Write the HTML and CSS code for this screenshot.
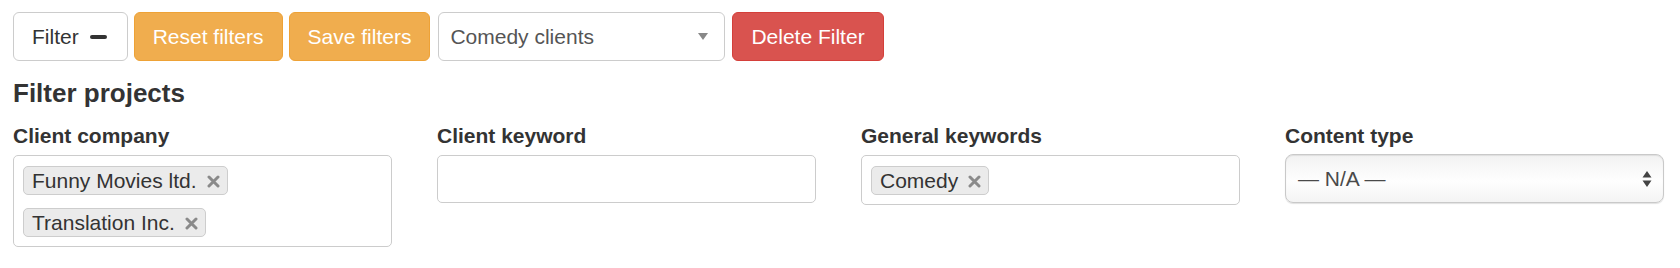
FILE: index.html
```html
<!DOCTYPE html>
<html lang="en">

<head>
    <meta charset="UTF-8">
    <meta name="viewport" content="width=device-width, initial-scale=1.0">
    <title>Filter projects</title>
    <link rel="stylesheet" href="styles.css">
</head>

<body>
    <div class="toolbar">
        <div class="btn btn-default">Filter <span class="minus"></span></div>
        <div class="btn btn-warning">Reset filters</div>
        <div class="btn btn-warning">Save filters</div>
        <div class="saved-select">
            <span>Comedy clients</span>
            <span class="caret"></span>
        </div>
        <div class="btn btn-danger">Delete Filter</div>
    </div>

    <h4 class="title">Filter projects</h4>

    <div class="fields">
        <div class="field">
            <label>Client company</label>
            <div class="tag-box">
                <span class="tag">Funny Movies ltd. <span class="tag-x"><svg width="13" height="13" viewBox="0 0 13 13"><path d="M2 2L11 11M11 2L2 11" stroke="#8a8a8a" stroke-width="3" stroke-linecap="round"/></svg></span></span>
                <span class="tag">Translation Inc. <span class="tag-x"><svg width="13" height="13" viewBox="0 0 13 13"><path d="M2 2L11 11M11 2L2 11" stroke="#8a8a8a" stroke-width="3" stroke-linecap="round"/></svg></span></span>
            </div>
        </div>
        <div class="field">
            <label>Client keyword</label>
            <div class="tag-box"></div>
        </div>
        <div class="field">
            <label>General keywords</label>
            <div class="tag-box">
                <span class="tag">Comedy <span class="tag-x"><svg width="13" height="13" viewBox="0 0 13 13"><path d="M2 2L11 11M11 2L2 11" stroke="#8a8a8a" stroke-width="3" stroke-linecap="round"/></svg></span></span>
            </div>
        </div>
        <div class="field">
            <label>Content type</label>
            <div class="native-select">
                <span>&mdash; N/A &mdash;</span>
                <svg class="updown" width="10" height="18" viewBox="0 0 10 18"><path d="M5 1L9.5 7.5H0.5Z M5 17L9.5 10.5H0.5Z" fill="#444"/></svg>
            </div>
        </div>
    </div>
</body>

</html>
```

FILE: styles.css
```css
* {
    margin: 0;
    padding: 0;
    box-sizing: border-box;
}

body {
    background-color: #fff;
    font-family: "Liberation Sans", Arial, sans-serif;
    font-size: 21px;
    color: #333;
    padding: 12px 13px;
}

.toolbar {
    display: flex;
    gap: 6px;
}

.btn {
    height: 49px;
    line-height: 47px;
    padding: 0 18px;
    border: 1px solid transparent;
    border-radius: 6px;
    white-space: nowrap;
}

.btn-default {
    border-color: #ccc;
    color: #333;
    background-color: #fff;
    display: flex;
    align-items: center;
    padding-right: 20px;
}

.minus {
    display: inline-block;
    width: 17px;
    height: 4px;
    border-radius: 2px;
    background-color: #333;
    margin-left: 11px;
}

.btn-warning {
    background-color: #f0ad4e;
    border-color: #eea236;
    color: #fff;
}

.btn-danger {
    background-color: #d9534f;
    border-color: #d43f3a;
    color: #fff;
}

.saved-select {
    width: 287px;
    height: 49px;
    margin: 0 1px 0 2px;
    border: 1px solid #ccc;
    border-radius: 6px;
    padding: 0 16px 0 11px;
    display: flex;
    align-items: center;
    justify-content: space-between;
    color: #555;
}

.caret {
    width: 0;
    height: 0;
    border-left: 5px solid transparent;
    border-right: 5px solid transparent;
    border-top: 7px solid #888;
}

.title {
    font-size: 26px;
    font-weight: bold;
    line-height: 30px;
    margin-top: 17px;
}

.fields {
    display: grid;
    grid-template-columns: repeat(4, 379px);
    column-gap: 45px;
    margin-top: 16px;
}

.field label {
    display: block;
    font-weight: bold;
    line-height: 24px;
    margin-bottom: 7px;
}

.tag-box {
    min-height: 48px;
    border: 1px solid #ccc;
    border-radius: 5px;
    padding: 10px 9px 0;
    display: flex;
    flex-direction: column;
    align-items: flex-start;
    gap: 13px;
}

.tag-box:has(.tag) {
    padding-bottom: 9px;
}

.tag {
    display: inline-flex;
    align-items: center;
    height: 29px;
    padding: 0 7px 0 8px;
    background-color: #ebebeb;
    border: 1px solid #cdcdcd;
    border-radius: 5px;
    color: #333;
    white-space: nowrap;
}

.tag-x {
    display: inline-flex;
    margin-left: 10px;
    margin-top: 2px;
}

.native-select {
    height: 49px;
    margin-top: -1px;
    border: 1px solid #c9c9c9;
    border-radius: 8px;
    background: linear-gradient(#f2f2f2, #fefefe 55%, #f4f4f4);
    box-shadow: inset 0 1px 1px rgba(0, 0, 0, 0.08), 0 1px 1px rgba(0, 0, 0, 0.12);
    display: flex;
    align-items: center;
    justify-content: space-between;
    padding: 0 11px 0 12px;
    color: #4a4a4a;
}
```
